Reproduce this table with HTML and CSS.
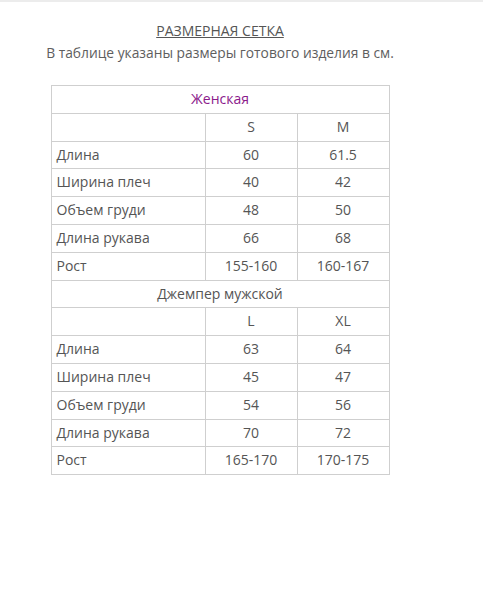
FILE: index.html
```html
<!DOCTYPE html>
<html lang="ru">
<head>
<meta charset="utf-8">
<link rel="stylesheet" href="styles.css">
</head>
<body>
<div class="topbar"></div>
<div class="page">
  <div class="title">РАЗМЕРНАЯ СЕТКА</div>
  <div class="subtitle">В таблице указаны размеры готового изделия в см.</div>
  <table class="sizes">
    <colgroup><col class="c1"><col class="c2"><col class="c3"></colgroup>
    <tr><td colspan="3" class="center accent">Женская</td></tr>
    <tr><td></td><td class="center">S</td><td class="center">M</td></tr>
    <tr><td>Длина</td><td class="center">60</td><td class="center">61.5</td></tr>
    <tr><td>Ширина плеч</td><td class="center">40</td><td class="center">42</td></tr>
    <tr><td>Объем груди</td><td class="center">48</td><td class="center">50</td></tr>
    <tr><td>Длина рукава</td><td class="center">66</td><td class="center">68</td></tr>
    <tr><td>Рост</td><td class="center">155-160</td><td class="center">160-167</td></tr>
    <tr><td colspan="3" class="center">Джемпер мужской</td></tr>
    <tr><td></td><td class="center">L</td><td class="center">XL</td></tr>
    <tr><td>Длина</td><td class="center">63</td><td class="center">64</td></tr>
    <tr><td>Ширина плеч</td><td class="center">45</td><td class="center">47</td></tr>
    <tr><td>Объем груди</td><td class="center">54</td><td class="center">56</td></tr>
    <tr><td>Длина рукава</td><td class="center">70</td><td class="center">72</td></tr>
    <tr><td>Рост</td><td class="center">165-170</td><td class="center">170-175</td></tr>
  </table>
</div>
</body>
</html>
```
FILE: styles.css
```css
html, body {
  margin: 0;
  padding: 0;
  background: #fff;
}
body {
  font-family: "Open Sans", "Liberation Sans", sans-serif;
  color: #555;
}
.topbar {
  height: 2px;
  background: #ececec;
}
.page {
  width: 424px;
  margin-left: 8px;
  padding-top: 19px;
  display: flex;
  flex-direction: column;
  align-items: center;
}
.title {
  font-size: 14px;
  line-height: 20px;
  text-decoration: underline;
  color: #555;
}
.subtitle {
  font-size: 13.8px;
  line-height: 20px;
  margin-top: 2px;
  color: #5e5e5e;
}
.sizes {
  margin-top: 22px;
  border-collapse: collapse;
  width: 339px;
  font-size: 14px;
  color: #555;
}
.c1 { width: 154px; }
.c2 { width: 92px; }
.c3 { width: 92px; }
.sizes td {
  border: 1px solid #cfcfcf;
  padding: 4px 5px;
  line-height: 18.8px;
  height: 18.8px;
}
.sizes td.center {
  text-align: center;
}
.sizes td.accent {
  color: #8b1a8b;
}
```
